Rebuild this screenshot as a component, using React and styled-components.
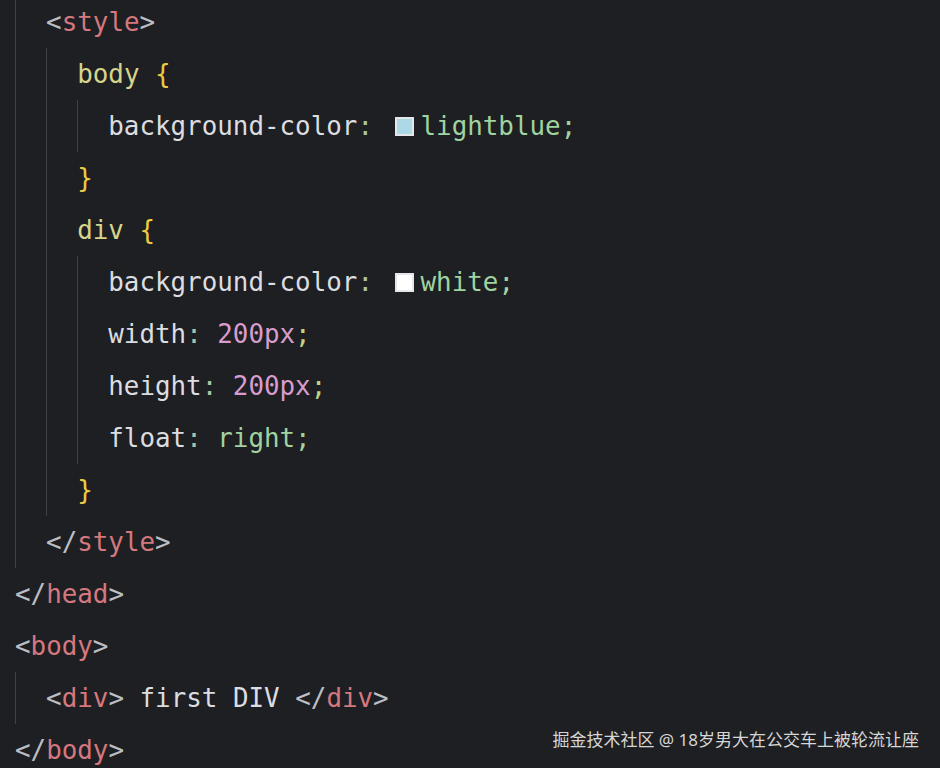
import React from "react";
import styled, { createGlobalStyle } from "styled-components";

const GlobalStyle = createGlobalStyle`
  html, body {
    margin: 0;
    padding: 0;
    background: #1e1f22;
  }
`;

const Editor = styled.div`
  position: relative;
  width: 940px;
  height: 768px;
  overflow: hidden;
  background: #1e1f22;
  font-family: "DejaVu Sans Mono", "Liberation Mono", monospace;
  font-size: 25.86px;
`;

const Lines = styled.div`
  display: flex;
  flex-direction: column;
  margin-top: -4px;
  padding-left: 15px;
`;

const Line = styled.div`
  display: flex;
  align-items: stretch;
  height: 52px;
`;

const Guide = styled.span`
  flex: none;
  width: 31.1px;
  border-left: 1px solid #404145;
  box-sizing: border-box;
`;

const Code = styled.span`
  display: flex;
  align-items: center;
  white-space: pre;
`;

const colors = {
  punct: "#bcbec4",
  tag: "#d5787f",
  sel: "#d7d48c",
  brace: "#efcb3f",
  prop: "#dcdde0",
  colon: "#a9c4a5",
  val: "#a0d3a0",
  num: "#d99dcd",
  semi: "#c1d483",
  text: "#dcdde0",
};

const Token = styled.span`
  color: ${(p) => colors[p.$kind]};
`;

const Swatch = styled.span`
  display: inline-block;
  width: 15px;
  height: 15px;
  margin: 0 7px 0 6px;
  border: 2px solid #e4e6ea;
  background: ${(p) => p.$color};
`;

const Watermark = styled.div`
  position: absolute;
  right: 21px;
  bottom: 17px;
  color: #d6d6d6;
  font-family: "Noto Sans", "Noto Sans CJK SC", sans-serif;
  font-size: 17px;
`;

const open = (name) => [
  ["punct", "<"],
  ["tag", name],
  ["punct", ">"],
];
const close = (name) => [
  ["punct", "</"],
  ["tag", name],
  ["punct", ">"],
];
const decl = (prop, value, kind, swatch) => [
  ["prop", prop],
  ["colon", ": "],
  ...(swatch ? [["swatch", swatch]] : []),
  [kind, value],
  [kind === "num" ? "semi" : kind, ";"],
];

const lines = [
  { indent: 1, tokens: open("style") },
  { indent: 2, tokens: [["sel", "body "], ["brace", "{"]] },
  { indent: 3, tokens: decl("background-color", "lightblue", "val", "#add8e6") },
  { indent: 2, tokens: [["brace", "}"]] },
  { indent: 2, tokens: [["sel", "div "], ["brace", "{"]] },
  { indent: 3, tokens: decl("background-color", "white", "val", "#ffffff") },
  { indent: 3, tokens: decl("width", "200px", "num") },
  { indent: 3, tokens: decl("height", "200px", "num") },
  { indent: 3, tokens: decl("float", "right", "val") },
  { indent: 2, tokens: [["brace", "}"]] },
  { indent: 1, tokens: close("style") },
  { indent: 0, tokens: close("head") },
  { indent: 0, tokens: open("body") },
  {
    indent: 1,
    tokens: [...open("div"), ["text", " first DIV "], ...close("div")],
  },
  { indent: 0, tokens: close("body") },
];

const App = () => (
  <Editor>
    <GlobalStyle />
    <Lines>
      {lines.map((line, i) => (
        <Line key={i}>
          {Array.from({ length: line.indent }).map((_, g) => (
            <Guide key={g} />
          ))}
          <Code>
            {line.tokens.map(([kind, text], j) =>
              kind === "swatch" ? (
                <Swatch key={j} $color={text} />
              ) : (
                <Token key={j} $kind={kind}>
                  {text}
                </Token>
              )
            )}
          </Code>
        </Line>
      ))}
    </Lines>
    <Watermark>掘金技术社区 @ 18岁男大在公交车上被轮流让座</Watermark>
  </Editor>
);

export default App;
